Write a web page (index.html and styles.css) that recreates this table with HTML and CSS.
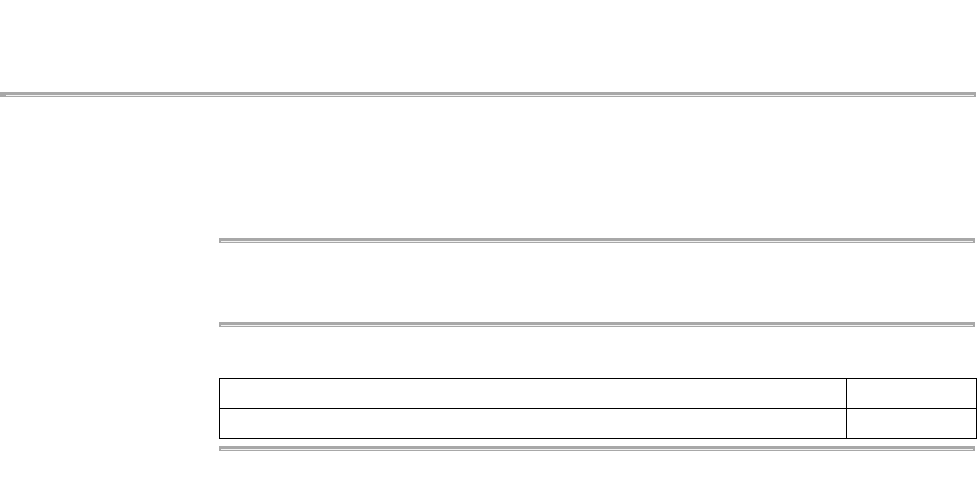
FILE: index.html
```html
<!DOCTYPE html>
<html>
<head>
<meta charset="utf-8">
<link rel="stylesheet" href="styles.css">
</head>
<body>
<div class="header"></div>
<div class="rule rule-full"></div>
<div class="content">
  <div class="rule rule-a"></div>
  <div class="rule rule-b"></div>
  <table class="grid">
    <tr><td class="main"></td><td class="side"></td></tr>
    <tr><td class="main"></td><td class="side"></td></tr>
  </table>
  <div class="rule rule-c"></div>
</div>
</body>
</html>
```
FILE: styles.css
```css
html, body {
  margin: 0;
  padding: 0;
  background: #ffffff;
  font-family: "Liberation Serif", serif;
}
.header {
  height: 92px;
}
.rule {
  height: 5px;
  background: #a8a8a8;
  position: relative;
}
.rule::after {
  content: "";
  position: absolute;
  left: 2px;
  right: 2px;
  top: 3px;
  height: 1px;
  background: #f2f2f2;
}
.rule-full {
  margin-right: 2px;
}
.rule-full::after {
  left: 6px;
}
.content {
  padding: 0 3px 0 219px;
}
.rule-a {
  margin-top: 141px;
}
.rule-b {
  margin-top: 79px;
}
.grid {
  margin-top: 51px;
  width: calc(100% + 2px);
  border-collapse: collapse;
  border: 1px solid #000;
}
.grid td {
  border: 1px solid #000;
  height: 29px;
  padding: 0;
}
.grid td.side {
  width: 129px;
}
.rule-c {
  margin-top: 7px;
}
```
